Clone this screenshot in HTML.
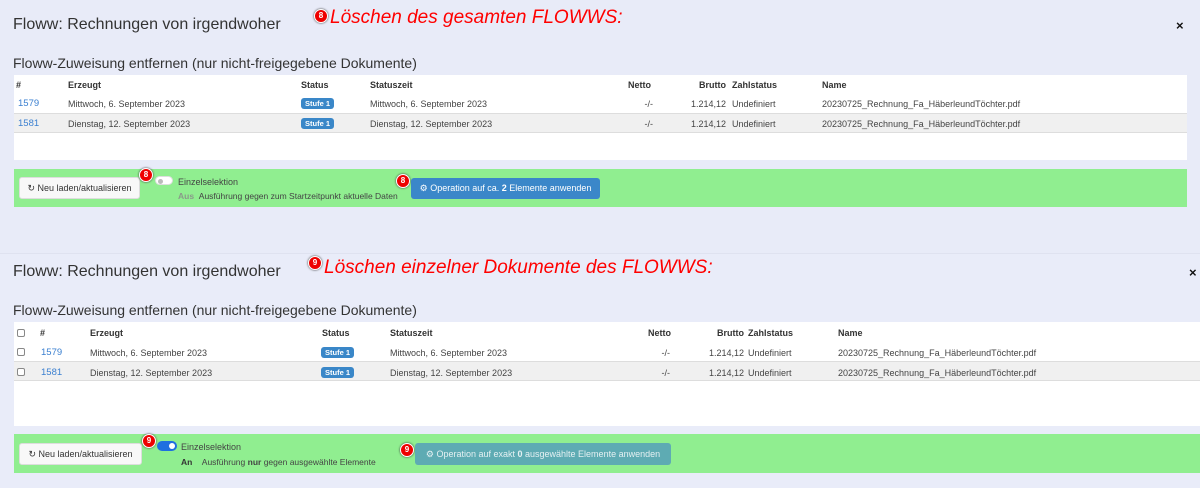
<!DOCTYPE html>
<html><head><meta charset="utf-8"><style>
*{margin:0;padding:0;box-sizing:border-box}
body{width:1200px;height:488px;background:#e8ebf8;font-family:"Liberation Sans",sans-serif;position:relative;overflow:hidden;color:#333}
.a{position:absolute;white-space:nowrap}
.r{position:absolute;white-space:nowrap;text-align:right}
.t{font-size:16px;color:#333}
.s{font-size:14px;color:#333}
.red{font-size:19px;color:#f00;font-style:italic}
.tbl{position:absolute;background:#fff}
.h{font-size:9px;font-weight:bold;color:#333}
.c{font-size:9px;color:#444}
.lnk{font-size:9.5px;color:#3a7fd0}
.badge{position:absolute;background:#3a87c8;color:#fff;font-size:7.5px;font-weight:bold;border-radius:3px;width:33px;height:11px;line-height:11px;text-align:center}
.row2{position:absolute;background:#f0f0f0;border-top:1px solid #ddd;border-bottom:1px solid #ddd}
.green{position:absolute;background:#90ee90}
.btn{position:absolute;background:#f8f8f8;border:1px solid #ddd;border-radius:3px;font-size:9px;color:#333;text-align:center}
.op{position:absolute;border-radius:3px;font-size:9px;color:#fff;text-align:center}
.m{position:absolute;width:14px;height:14px;border-radius:50%;background:#e00;border:1.5px solid #fff;box-shadow:0 0 2px #333;color:#fff;font-size:8px;font-weight:bold;text-align:center;line-height:11px}
.x{position:absolute;font-size:13px;font-weight:bold;color:#111}
.cb{position:absolute;width:8px;height:8px;border:1px solid #888;border-radius:2px;background:#fff}
</style></head><body>

<!-- Panel 1 -->
<div class="a t" style="left:13px;top:16px">Floww: Rechnungen von irgendwoher</div>
<div class="m" style="left:314px;top:9px">8</div>
<div class="a red" style="left:330px;top:7px">Löschen des gesamten FLOWWS:</div>
<div class="x" style="left:1176px;top:18px">×</div>
<div class="a s" style="left:13px;top:55px">Floww-Zuweisung entfernen (nur nicht-freigegebene Dokumente)</div>
<div class="tbl" style="left:14px;top:75px;width:1173px;height:85px"></div>
<div class="row2" style="left:14px;top:113px;width:1173px;height:20px"></div>
<div class="a h" style="left:16px;top:80px">#</div>
<div class="a h" style="left:68px;top:80px">Erzeugt</div>
<div class="a h" style="left:301px;top:80px">Status</div>
<div class="a h" style="left:370px;top:80px">Statuszeit</div>
<div class="r h" style="left:580px;width:71px;top:80px">Netto</div>
<div class="r h" style="left:640px;width:86px;top:80px">Brutto</div>
<div class="a h" style="left:732px;top:80px">Zahlstatus</div>
<div class="a h" style="left:822px;top:80px">Name</div>
<div class="a lnk" style="left:18px;top:98px">1579</div>
<div class="a c" style="left:68px;top:99px">Mittwoch, 6. September 2023</div>
<div class="badge" style="left:301px;top:98px">Stufe 1</div>
<div class="a c" style="left:370px;top:99px">Mittwoch, 6. September 2023</div>
<div class="r c" style="left:580px;width:73px;top:99px">-/-</div>
<div class="r c" style="left:640px;width:86px;top:99px">1.214,12</div>
<div class="a c" style="left:732px;top:99px">Undefiniert</div>
<div class="a c" style="left:822px;top:99px">20230725_Rechnung_Fa_HäberleundTöchter.pdf</div>
<div class="a lnk" style="left:18px;top:118px">1581</div>
<div class="a c" style="left:68px;top:119px">Dienstag, 12. September 2023</div>
<div class="badge" style="left:301px;top:118px">Stufe 1</div>
<div class="a c" style="left:370px;top:119px">Dienstag, 12. September 2023</div>
<div class="r c" style="left:580px;width:73px;top:119px">-/-</div>
<div class="r c" style="left:640px;width:86px;top:119px">1.214,12</div>
<div class="a c" style="left:732px;top:119px">Undefiniert</div>
<div class="a c" style="left:822px;top:119px">20230725_Rechnung_Fa_HäberleundTöchter.pdf</div>

<div class="green" style="left:14px;top:169px;width:1173px;height:38px"></div>
<div class="btn" style="left:19px;top:177px;width:121px;height:22px;line-height:20px">&#x21bb; Neu laden/aktualisieren</div>
<div class="m" style="left:139px;top:168px">8</div>
<div class="a" style="left:155px;top:176px;width:18px;height:9px;border-radius:5px;background:#fff;border:1px solid #ddd"><div style="position:absolute;left:2px;top:1.5px;width:5px;height:5px;border-radius:50%;background:#bbb"></div></div>
<div class="a c" style="left:178px;top:177px">Einzelselektion</div>
<div class="a c" style="left:178px;top:191px;font-size:8.5px"><b style="color:#8a9a8a">Aus</b>&nbsp;&nbsp;Ausführung gegen zum Startzeitpunkt aktuelle Daten</div>
<div class="m" style="left:396px;top:174px">8</div>
<div class="op" style="left:411px;top:178px;width:189px;height:21px;line-height:21px;background:#3b87c9">&#x2699; Operation auf ca. <b>2</b> Elemente anwenden</div>

<!-- Panel 2 -->
<div style="position:absolute;left:0;top:253px;width:1200px;height:235px;background:#e9ecf9;border-top:1px solid #dfe2f0"></div>
<div class="a t" style="left:13px;top:263px">Floww: Rechnungen von irgendwoher</div>
<div class="m" style="left:308px;top:256px">9</div>
<div class="a red" style="left:324px;top:257px">Löschen einzelner Dokumente des FLOWWS:</div>
<div class="x" style="left:1189px;top:265px">×</div>
<div class="a s" style="left:13px;top:302px">Floww-Zuweisung entfernen (nur nicht-freigegebene Dokumente)</div>
<div class="tbl" style="left:14px;top:322px;width:1186px;height:104px"></div>
<div class="row2" style="left:14px;top:361px;width:1186px;height:20px"></div>
<div class="cb" style="left:17px;top:329px"></div>
<div class="a h" style="left:40px;top:328px">#</div>
<div class="a h" style="left:90px;top:328px">Erzeugt</div>
<div class="a h" style="left:322px;top:328px">Status</div>
<div class="a h" style="left:390px;top:328px">Statuszeit</div>
<div class="r h" style="left:600px;width:71px;top:328px">Netto</div>
<div class="r h" style="left:660px;width:84px;top:328px">Brutto</div>
<div class="a h" style="left:748px;top:328px">Zahlstatus</div>
<div class="a h" style="left:838px;top:328px">Name</div>
<div class="cb" style="left:17px;top:348px"></div>
<div class="a lnk" style="left:41px;top:347px">1579</div>
<div class="a c" style="left:90px;top:348px">Mittwoch, 6. September 2023</div>
<div class="badge" style="left:321px;top:347px">Stufe 1</div>
<div class="a c" style="left:390px;top:348px">Mittwoch, 6. September 2023</div>
<div class="r c" style="left:600px;width:70px;top:348px">-/-</div>
<div class="r c" style="left:660px;width:84px;top:348px">1.214,12</div>
<div class="a c" style="left:748px;top:348px">Undefiniert</div>
<div class="a c" style="left:838px;top:348px">20230725_Rechnung_Fa_HäberleundTöchter.pdf</div>
<div class="cb" style="left:17px;top:368px"></div>
<div class="a lnk" style="left:41px;top:367px">1581</div>
<div class="a c" style="left:90px;top:368px">Dienstag, 12. September 2023</div>
<div class="badge" style="left:321px;top:367px">Stufe 1</div>
<div class="a c" style="left:390px;top:368px">Dienstag, 12. September 2023</div>
<div class="r c" style="left:600px;width:70px;top:368px">-/-</div>
<div class="r c" style="left:660px;width:84px;top:368px">1.214,12</div>
<div class="a c" style="left:748px;top:368px">Undefiniert</div>
<div class="a c" style="left:838px;top:368px">20230725_Rechnung_Fa_HäberleundTöchter.pdf</div>

<div class="green" style="left:14px;top:434px;width:1186px;height:39px"></div>
<div class="btn" style="left:19px;top:443px;width:123px;height:22px;line-height:20px">&#x21bb; Neu laden/aktualisieren</div>
<div class="m" style="left:142px;top:434px">9</div>
<div class="a" style="left:157px;top:441px;width:20px;height:10px;border-radius:5px;background:#1e6fe0"><div style="position:absolute;right:2px;top:2px;width:6px;height:6px;border-radius:50%;background:#fff"></div></div>
<div class="a c" style="left:181px;top:442px">Einzelselektion</div>
<div class="a c" style="left:181px;top:457px;font-size:8.5px"><b style="color:#333">An</b>&nbsp;&nbsp;&nbsp;&nbsp;Ausführung <b>nur</b> gegen ausgewählte Elemente</div>
<div class="m" style="left:400px;top:443px">9</div>
<div class="op" style="left:415px;top:443px;width:256px;height:22px;line-height:22px;background:#5eabb3;color:#e4f0f2">&#x2699; Operation auf exakt <b>0</b> ausgewählte Elemente anwenden</div>
</body></html>
